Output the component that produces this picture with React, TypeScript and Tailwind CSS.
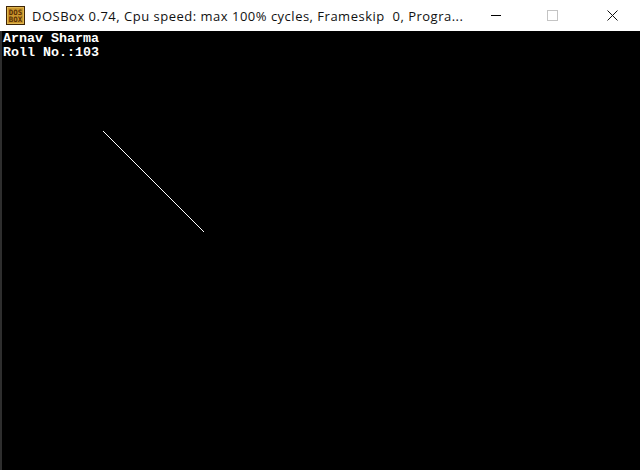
import React from 'react'

function DosIcon() {
  return (
    <svg width="19" height="19" viewBox="0 0 19 19" className="shrink-0">
      <rect x="0.5" y="0.5" width="18" height="18" fill="#c9962c" stroke="#3f2506" />
      <rect x="1.5" y="1.5" width="16" height="16" fill="none" stroke="#e8c260" strokeWidth="0.7" />
      <text x="9.5" y="8.6" textAnchor="middle" fontSize="7.4" fontFamily="'DejaVu Sans Mono', monospace" fontWeight="bold" fill="#5a2e04">DOS</text>
      <text x="9.5" y="16.2" textAnchor="middle" fontSize="7.4" fontFamily="'DejaVu Sans Mono', monospace" fontWeight="bold" fill="#5a2e04">BOX</text>
    </svg>
  )
}

function TitleBar() {
  return (
    <div className="flex items-center h-[31px] bg-white text-black">
      <div className="pl-[6px] pr-[7px] flex items-center">
        <DosIcon />
      </div>
      <div className="flex-1 whitespace-pre text-[13px] tracking-[0.5px] font-['Open_Sans',sans-serif] text-[#111] leading-none pt-[1px]">
        DOSBox 0.74, Cpu speed: max 100% cycles, Frameskip  0, Progra...
      </div>
      <div className="flex items-center pr-[22px]">
        <div className="w-[10px] h-[1px] bg-black" />
        <div className="ml-[46px] w-[11px] h-[11px] border border-[#c4c4c4]" />
        <svg width="11" height="11" viewBox="0 0 11 11" className="ml-[49px]">
          <path d="M0.5 0.5 L10.5 10.5 M10.5 0.5 L0.5 10.5" stroke="#111" strokeWidth="1" />
        </svg>
      </div>
    </div>
  )
}

export default function App() {
  return (
    <div className="w-[640px] h-[470px] overflow-hidden bg-black flex flex-col">
      <TitleBar />
      <div className="flex-1 flex">
        <div className="w-[2px] bg-[#2e2e2e]" />
        <div className="flex-1 relative">
          <div className="pl-[1px] pt-[1px] font-['Liberation_Mono',monospace] font-bold text-white text-[13.33px] leading-[14px]">
            <div>Arnav Sharma</div>
            <div>Roll No.:103</div>
          </div>
          <svg width="638" height="439" className="absolute left-0 top-0" shapeRendering="crispEdges">
            <line x1="101" y1="100" x2="202" y2="201" stroke="#fff" strokeWidth="1" />
          </svg>
        </div>
      </div>
    </div>
  )
}
